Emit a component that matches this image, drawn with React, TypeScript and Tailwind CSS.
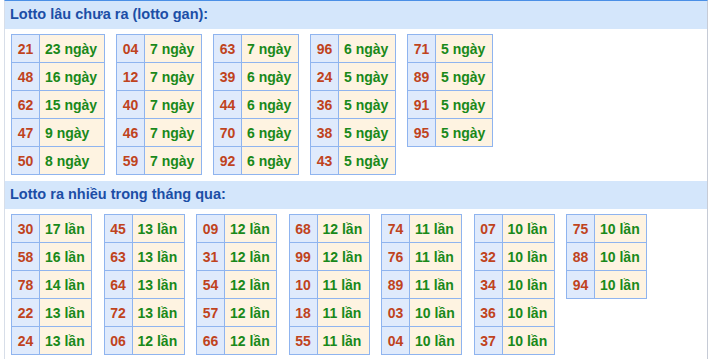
import React from "react";

type Row = [string, string];

const ganTables: Row[][] = [
  [["21", "23 ngày"], ["48", "16 ngày"], ["62", "15 ngày"], ["47", "9 ngày"], ["50", "8 ngày"]],
  [["04", "7 ngày"], ["12", "7 ngày"], ["40", "7 ngày"], ["46", "7 ngày"], ["59", "7 ngày"]],
  [["63", "7 ngày"], ["39", "6 ngày"], ["44", "6 ngày"], ["70", "6 ngày"], ["92", "6 ngày"]],
  [["96", "6 ngày"], ["24", "5 ngày"], ["36", "5 ngày"], ["38", "5 ngày"], ["43", "5 ngày"]],
  [["71", "5 ngày"], ["89", "5 ngày"], ["91", "5 ngày"], ["95", "5 ngày"]],
];

const nhieuTables: Row[][] = [
  [["30", "17 lần"], ["58", "16 lần"], ["78", "14 lần"], ["22", "13 lần"], ["24", "13 lần"]],
  [["45", "13 lần"], ["63", "13 lần"], ["64", "13 lần"], ["72", "13 lần"], ["06", "12 lần"]],
  [["09", "12 lần"], ["31", "12 lần"], ["54", "12 lần"], ["57", "12 lần"], ["66", "12 lần"]],
  [["68", "12 lần"], ["99", "12 lần"], ["10", "11 lần"], ["18", "11 lần"], ["55", "11 lần"]],
  [["74", "11 lần"], ["76", "11 lần"], ["89", "11 lần"], ["03", "10 lần"], ["04", "10 lần"]],
  [["07", "10 lần"], ["32", "10 lần"], ["34", "10 lần"], ["36", "10 lần"], ["37", "10 lần"]],
  [["75", "10 lần"], ["88", "10 lần"], ["94", "10 lần"]],
];

const LotoTable = ({ rows, valueWidth }: { rows: Row[]; valueWidth: string }) => {
  return (
    <div className="flex flex-col border-t border-l border-[#8fb4ef] self-start">
      {rows.map(([num, val], index) => (
        <div key={index} className="flex h-[28px]">
          <div className="w-[28px] flex items-center justify-center pt-[1px] bg-[#dfeafc] text-[#c0431d] border-r border-b border-[#8fb4ef]">
            {num}
          </div>
          <div
            className={`${valueWidth} flex items-center pl-[5px] pt-[1px] bg-[#fef3e1] text-[#19891a] border-r border-b border-[#8fb4ef]`}
          >
            {val}
          </div>
        </div>
      ))}
    </div>
  );
};

const SectionTitle = ({ title }: { title: string }) => (
  <div className="h-[28px] flex items-center pl-[5px] bg-[#d4e6fb] text-[#1c4ea6] text-[14.5px]">
    {title}
  </div>
);

export default function App() {
  return (
    <div className="w-[710px] h-[359px] bg-white overflow-hidden font-['Liberation_Sans',Arial,sans-serif] font-bold text-[14px]">
      <div className="ml-[4px] w-[704px] h-[359px] border-t border-t-[#4a8fe6] border-l border-l-[#d7dee9] border-r border-r-[#c6cbd6]">
        <SectionTitle title="Lotto lâu chưa ra (lotto gan):" />
        <div className="flex gap-[11px] pl-[6px] pt-[5px]">
          {ganTables.map((rows, i) => (
            <LotoTable key={i} rows={rows} valueWidth={i === 0 ? "w-[65px]" : "w-[57px]"} />
          ))}
        </div>
        <div className="mt-[6px]">
          <SectionTitle title="Lotto ra nhiều trong tháng qua:" />
        </div>
        <div className="flex gap-[11.5px] pl-[6px] pt-[5px]">
          {nhieuTables.map((rows, i) => (
            <LotoTable key={i} rows={rows} valueWidth="w-[52px]" />
          ))}
        </div>
      </div>
    </div>
  );
}
